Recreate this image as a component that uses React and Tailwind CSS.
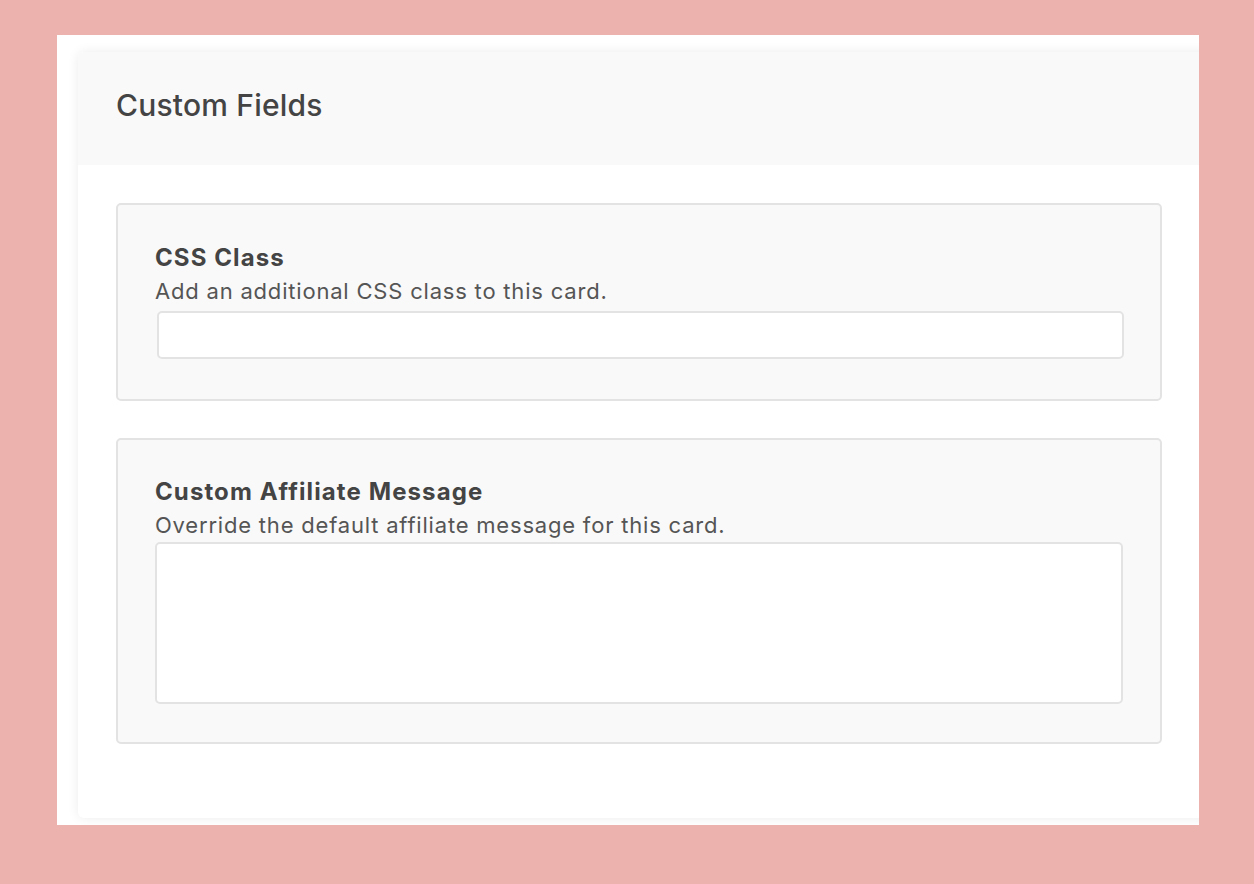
export default function App() {
  return (
    <div
      className="w-[1254px] h-[884px] bg-[#ecb3ae] pt-[35px] pl-[57px]"
      style={{ fontFamily: 'Inter, "Noto Sans", sans-serif' }}
    >
      <div className="w-[1142px] h-[790px] bg-white overflow-hidden pt-[17px] pl-[21px]">
        <div className="w-[1140px] h-[766px] bg-white rounded-[6px] shadow-[0_0_12px_rgba(0,0,0,0.08)] overflow-hidden">
          <div className="h-[113px] bg-[#f9f9f9] flex items-center pl-[38px] pb-[6px]">
            <h1 className="text-[30px] font-medium text-[#444] tracking-[0.2px]">Custom Fields</h1>
          </div>
          <div className="pt-[38px] pl-[38px] flex flex-col gap-[37px]">
            <div className="w-[1046px] h-[198px] bg-[#f9f9f9] border-2 border-[#e3e3e3] rounded-[5px] pt-[36px] pl-[37px] pr-[35px]">
              <div className="text-[24px] font-bold text-[#444] leading-[34px] tracking-[1.1px]">CSS Class</div>
              <div className="text-[22px] text-[#555] leading-[32px] tracking-[0.8px]">Add an additional CSS class to this card.</div>
              <input
                type="text"
                className="mt-[4px] ml-[2px] w-[967px] h-[48px] bg-white border-2 border-[#e3e3e3] rounded-[5px] outline-none"
              />
            </div>
            <div className="w-[1046px] h-[306px] bg-[#f9f9f9] border-2 border-[#e3e3e3] rounded-[5px] pt-[35px] pl-[37px] pr-[37px]">
              <div className="text-[24px] font-bold text-[#444] leading-[34px] tracking-[1.1px]">Custom Affiliate Message</div>
              <div className="text-[22px] text-[#555] leading-[32px] tracking-[0.8px]">Override the default affiliate message for this card.</div>
              <textarea className="mt-[1px] block w-[968px] h-[162px] bg-white border-2 border-[#e3e3e3] rounded-[5px] outline-none resize-none" />
            </div>
          </div>
        </div>
      </div>
    </div>
  )
}
